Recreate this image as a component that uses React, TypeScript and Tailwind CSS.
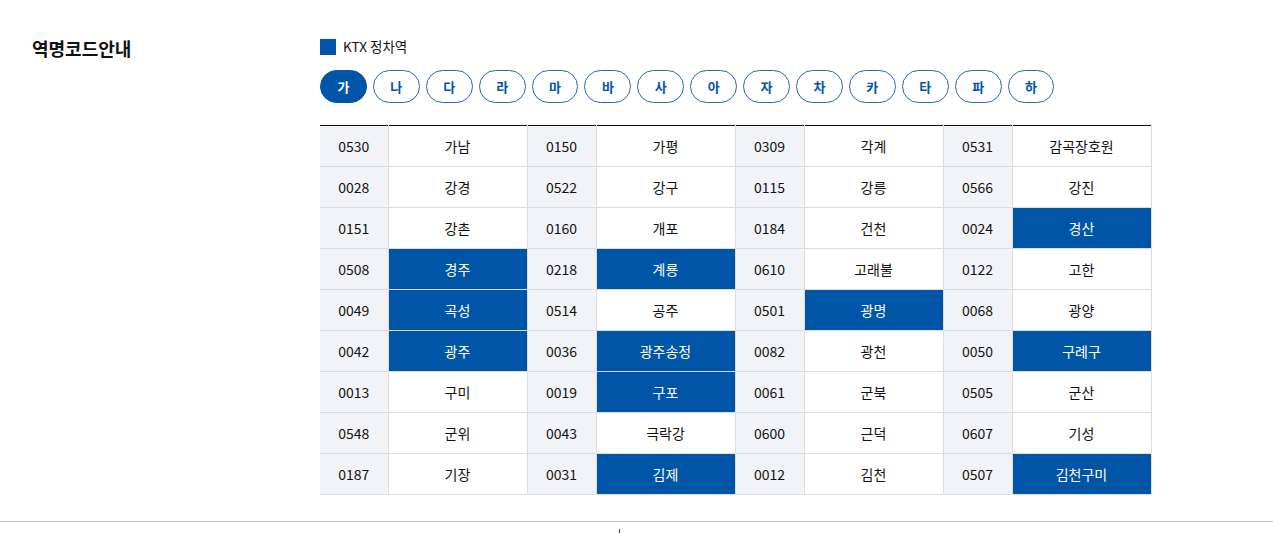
import { Fragment } from 'react'
import { clsx } from 'clsx'

type Station = { code: string; name: string; ktx?: boolean }

const consonants = ['가', '나', '다', '라', '마', '바', '사', '아', '자', '차', '카', '타', '파', '하']

const rows: Station[][] = [
  [
    { code: '0530', name: '가남' },
    { code: '0150', name: '가평' },
    { code: '0309', name: '각계' },
    { code: '0531', name: '감곡장호원' },
  ],
  [
    { code: '0028', name: '강경' },
    { code: '0522', name: '강구' },
    { code: '0115', name: '강릉' },
    { code: '0566', name: '강진' },
  ],
  [
    { code: '0151', name: '강촌' },
    { code: '0160', name: '개포' },
    { code: '0184', name: '건천' },
    { code: '0024', name: '경산', ktx: true },
  ],
  [
    { code: '0508', name: '경주', ktx: true },
    { code: '0218', name: '계룡', ktx: true },
    { code: '0610', name: '고래불' },
    { code: '0122', name: '고한' },
  ],
  [
    { code: '0049', name: '곡성', ktx: true },
    { code: '0514', name: '공주' },
    { code: '0501', name: '광명', ktx: true },
    { code: '0068', name: '광양' },
  ],
  [
    { code: '0042', name: '광주', ktx: true },
    { code: '0036', name: '광주송정', ktx: true },
    { code: '0082', name: '광천' },
    { code: '0050', name: '구례구', ktx: true },
  ],
  [
    { code: '0013', name: '구미' },
    { code: '0019', name: '구포', ktx: true },
    { code: '0061', name: '군북' },
    { code: '0505', name: '군산' },
  ],
  [
    { code: '0548', name: '군위' },
    { code: '0043', name: '극락강' },
    { code: '0600', name: '근덕' },
    { code: '0607', name: '기성' },
  ],
  [
    { code: '0187', name: '기장' },
    { code: '0031', name: '김제', ktx: true },
    { code: '0012', name: '김천' },
    { code: '0507', name: '김천구미', ktx: true },
  ],
]

export default function App() {
  return (
    <div
      className="min-h-[533px] bg-white text-[#111]"
      style={{ fontFamily: '"Noto Sans CJK KR", "Noto Sans", sans-serif' }}
    >
      <div className="flex px-8 pt-[34px] pb-[26px]">
        {/* Title */}
        <h2 className="w-[288px] shrink-0 text-[18px] font-bold leading-[28px]">역명코드안내</h2>

        <div className="w-[831px]">
          {/* Legend */}
          <div className="flex h-[26px] items-center gap-[7px]">
            <span className="h-4 w-4 bg-[#0055a6]" />
            <span className="text-[13.5px] leading-none">KTX 정차역</span>
          </div>

          {/* Consonant tabs */}
          <div className="mt-[10px] flex gap-[6px]">
            {consonants.map((c, i) => (
              <button
                key={c}
                className={clsx(
                  'flex h-[33px] w-[46.9px] items-center justify-center rounded-full border text-[13px] font-bold',
                  i === 0
                    ? 'border-[#0055a6] bg-[#0055a6] text-white'
                    : 'border-[#2a66ad] bg-white text-[#0055a6]',
                )}
              >
                {c}
              </button>
            ))}
          </div>

          {/* Station table */}
          <table className="mt-[22px] w-[831px] table-fixed border-collapse border-t border-t-[#111] text-[14px]">
            <colgroup>
              <col className="w-[68px]" />
              <col className="w-[139px]" />
              <col className="w-[69px]" />
              <col className="w-[139px]" />
              <col className="w-[69px]" />
              <col className="w-[139px]" />
              <col className="w-[69px]" />
              <col className="w-[139px]" />
            </colgroup>
            <tbody>
              {rows.map((row, r) => (
                <tr key={r} className="h-[41px]">
                  {row.map((s) => (
                    <Fragment key={s.code}>
                      <td className="border-b border-r border-[#dddddd] bg-[#f2f3f7] text-center">{s.code}</td>
                      <td
                        className={clsx(
                          'border-b border-r border-[#dddddd] text-center',
                          s.ktx ? 'bg-[#0055a6] text-white' : 'bg-white',
                        )}
                      >
                        {s.name}
                      </td>
                    </Fragment>
                  ))}
                </tr>
              ))}
            </tbody>
          </table>
        </div>
      </div>
      <div className="border-t border-[#c8c8c8]" />
      <div className="ml-[619px] mt-[7px] h-[4px] w-px bg-[#444]" />
    </div>
  )
}
